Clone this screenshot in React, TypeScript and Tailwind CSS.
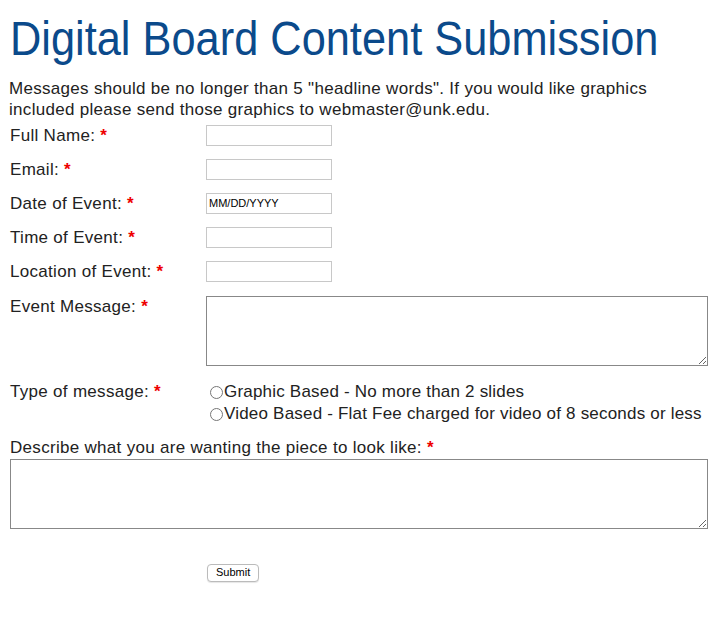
export default function App() {
  const rows = ['Full Name:', 'Email:', 'Date of Event:', 'Time of Event:', 'Location of Event:'];

  return (
    <div className="bg-white min-h-[619px] px-[9px] pt-[10px] text-[#222] font-['Liberation_Sans',Arial,sans-serif] text-[17px] tracking-[0.3px]">
      <h1 className="inline-block whitespace-nowrap origin-left scale-x-[0.885] text-[#0b4a8b] text-[49px] leading-[56px] tracking-normal ml-[1px]">
        Digital Board Content Submission
      </h1>
      <p className="mt-[12px] leading-[21px]">
        Messages should be no longer than 5 "headline words". If you would like graphics included please send those graphics to webmaster@unk.edu.
      </p>

      <div className="-mt-[2px] pl-[1px]">
        {rows.map((label, i) => (
          <div key={label} className="flex items-center h-[34px]">
            <div className="w-[196px] pt-[2px]">
              {label} <span className="text-[#e00] font-bold">*</span>
            </div>
            <input
              type="text"
              defaultValue={i === 2 ? 'MM/DD/YYYY' : ''}
              className="w-[126px] h-[21px] border border-[#c8c8c8] px-[2px] text-[11px] tracking-normal text-black font-['Liberation_Sans',Arial,sans-serif]"
            />
          </div>
        ))}

        <div className="flex mt-[8px]">
          <div className="w-[196px] leading-[21px]">
            Event Message: <span className="text-[#e00] font-bold">*</span>
          </div>
          <textarea className="w-[502px] h-[70px] border border-[#888] resize-y" />
        </div>

        <div className="flex mt-[15px] leading-[22px]">
          <div className="w-[196px]">
            Type of message: <span className="text-[#e00] font-bold">*</span>
          </div>
          <div className="flex flex-col tracking-[0.2px]">
            <label className="flex items-center">
              <input type="radio" name="type" className="w-[13px] h-[13px] ml-[4px] mr-[1px] accent-gray-400" />
              Graphic Based - No more than 2 slides
            </label>
            <label className="flex items-center">
              <input type="radio" name="type" className="w-[13px] h-[13px] ml-[4px] mr-[1px] accent-gray-400" />
              Video Based - Flat Fee charged for video of 8 seconds or less
            </label>
          </div>
        </div>

        <div className="mt-[12px] leading-[21px]">
          Describe what you are wanting the piece to look like: <span className="text-[#e00] font-bold">*</span>
        </div>
        <textarea className="block mt-[1px] w-[698px] h-[70px] border border-[#888] resize-y" />

        <div className="pl-[197px] mt-[29px]">
          <button className="h-[18px] px-[8px] border border-[#bbb] rounded-[4px] bg-white text-[11px] tracking-normal text-black leading-none shadow-[0_1px_1px_rgba(0,0,0,0.1)]">
            Submit
          </button>
        </div>
      </div>
    </div>
  );
}
